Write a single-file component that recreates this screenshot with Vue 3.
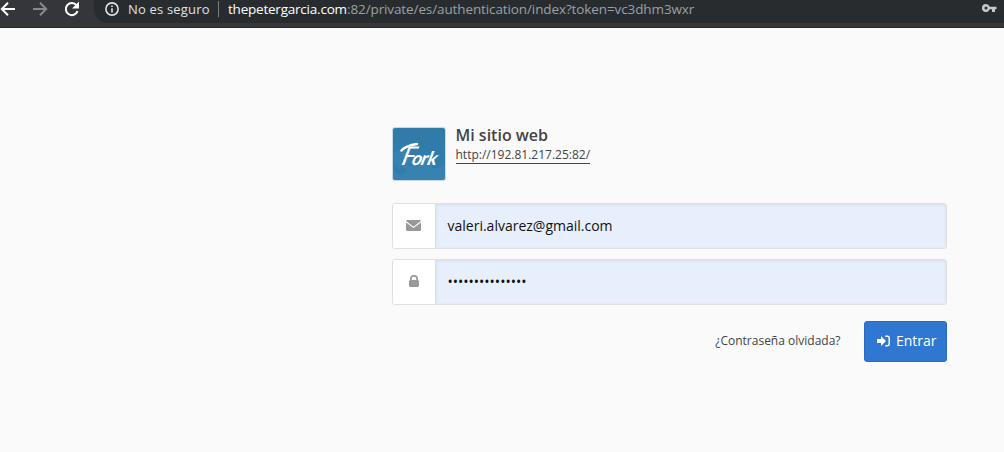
<script setup>
const password = '•'.repeat(15)
</script>

<template>
  <div class="page">
    <header class="toolbar">
      <nav class="nav">
        <svg class="nav-icon" viewBox="0 0 16 18"><path d="M15 9H2M8 2.700 1.800 9 8 15.300" /></svg>
        <svg class="nav-icon dim" viewBox="0 0 16 18"><path d="M1 9h13M8 2.700 14.200 9 8 15.300" /></svg>
        <svg class="nav-icon reload" viewBox="0 0 16 18"><path d="M13.600 11.200A6.100 6.100 0 1 1 12.600 5.100" /><path class="solid" d="M15 1.500v7H8z" /></svg>
      </nav>
      <div class="omnibox">
        <svg class="info" viewBox="0 0 14 14"><circle cx="7" cy="7" r="6.100" /><path d="M7 6.200v4.300M7 3.500v1.600" /></svg>
        <span class="secure">No es seguro</span>
        <i class="sep"></i>
        <span class="host">thepetergarcia.com</span><span class="path">:82/private/es/authentication/index?token=vc3dhm3wxr</span>
        <svg class="key" viewBox="0 0 15 8"><path fill-rule="evenodd" d="M4 0a4 4 0 1 0 3.700 5.300H10V8h3V5.300h1.500V2.700H7.700A4 4 0 0 0 4 0zm0 2.500a1.500 1.500 0 1 1 0 3 1.500 1.500 0 0 1 0-3z" /></svg>
      </div>
    </header>

    <main class="login">
      <div class="site">
        <svg class="logo" viewBox="0 0 54 54">
          <defs>
            <linearGradient id="sky" x1="0" y1="0" x2="0" y2="1"><stop offset="0" stop-color="#307ba8" /><stop offset="1" stop-color="#317dad" /></linearGradient>
          </defs>
          <rect x=".5" y=".5" width="53" height="53" rx="2.500" fill="url(#sky)" stroke="#c5dae7" />
          <path fill="#4389b8" d="M1 27c5-6 14-5 17 2 1 4-1 7-3 8 5 6 9-4 17-6 7-1 11 5 8 10 5 1 9 0 13-4v14l-2 2H3l-2-2v-8c4 5 10 6 13 2 2-5-4-7-7-3-4-4-6-6-6-10z" opacity=".4" />
          <g transform="translate(9.500 38) skewX(-14)">
            <text class="brand"><tspan class="cap" x="-1">F</tspan><tspan x="9.500">o</tspan><tspan x="18.500">r</tspan><tspan x="25">k</tspan></text>
          </g>
          <path class="swash" d="M9.500 23.500c3.500-4 9-5.500 15.500-6.500" />
        </svg>
        <div class="site-text">
          <h1>Mi sitio web</h1>
          <a class="site-url">http://192.81.217.25:82/</a>
        </div>
      </div>

      <div class="field">
        <span class="addon"><svg class="mail" viewBox="0 0 15 11"><path d="M1 0h13l1 1-7.500 5.700L0 1z" /><path d="M0 2.500 7.500 8 15 2.500V10l-1 1H1l-1-1z" /></svg></span>
        <span class="value">valeri.alvarez@gmail.com</span>
      </div>
      <div class="field">
        <span class="addon"><svg class="lock" viewBox="0 0 10 12"><path fill-rule="evenodd" d="M1 5V4a4 4 0 0 1 8 0v1l1 1v5l-1 1H1l-1-1V6zm1.700 0h4.600V4a2.300 2.300 0 0 0-4.600 0z" /></svg></span>
        <span class="value dots">{{ password }}</span>
      </div>

      <div class="actions">
        <a class="forgot">¿Contraseña olvidada?</a>
        <button class="submit">
          <svg viewBox="0 0 13 12"><path class="arrow" d="M0 4h4V1l5 5-5 5V8H0z" /><path class="door" d="M8.300 1.200h2.200a1.700 1.700 0 0 1 1.700 1.700v6.200a1.700 1.700 0 0 1-1.700 1.700H8.300" /></svg>
          <span>Entrar</span>
        </button>
      </div>
    </main>
  </div>
</template>

<style>
body {
  background: #fafafa;
}
</style>

<style scoped>
.page {
  height: 452px;
  overflow: hidden;
  background: #fafafa;
  color: #444;
  font-family: "Open Sans", "Noto Sans", sans-serif;
}
.toolbar {
  box-sizing: border-box;
  height: 28px;
  display: flex;
  background: #35363a;
  border-bottom: 1px solid #252629;
}
.nav {
  width: 94px;
  height: 18px;
  display: flex;
  gap: 16px;
  flex: none;
}
.nav-icon {
  width: 16px;
  height: 18px;
  fill: none;
  stroke: #fff;
  stroke-width: 2;
}
.nav-icon.dim {
  stroke: #87888b;
}
.nav-icon .solid {
  fill: #fff;
  stroke: none;
}
.omnibox {
  flex: 1;
  height: 23px;
  box-sizing: border-box;
  display: flex;
  padding-left: 11px;
  background: #282c2f;
  border-bottom-left-radius: 14px;
  font-size: 13.5px;
  line-height: 18px;
  white-space: pre;
}
.info {
  width: 14px;
  height: 14px;
  margin-top: 2px;
  fill: none;
  stroke: #dfe1e5;
  stroke-width: 1.6;
}
.secure {
  width: 90px;
  margin-left: 9px;
  color: #dfe1e5;
  font-size: 13px;
  letter-spacing: 0.18px;
}
.sep {
  width: 1px;
  height: 16px;
  margin-right: 9px;
  margin-top: 1px;
  background: #7b7e81;
}
.host {
  width: 119px;
  color: #fff;
  letter-spacing: -0.22px;
}
.path {
  color: #9aa0a6;
  letter-spacing: -0.11px;
}
.key {
  width: 15px;
  height: 8px;
  margin: 4px 7px 0 auto;
  fill: #c6c8cb;
}
.login {
  width: 555px;
  margin: 99px 0 0 392px;
}
.site {
  display: flex;
  height: 54px;
  margin-bottom: 22px;
}
.logo {
  width: 54px;
  height: 54px;
  margin-right: 9.5px;
}
.brand {
  font: italic 700 19px "Lato", sans-serif;
  fill: #fff;
}
.cap {
  font-size: 26px;
  font-weight: 400;
}
.swash {
  fill: none;
  stroke: #fff;
  stroke-width: 2.5;
  stroke-linecap: round;
}
h1 {
  margin: -2px 0 0;
  font-size: 16px;
  font-weight: 600;
  line-height: 20px;
}
.site-url {
  display: inline-block;
  height: 18px;
  border-bottom: 1px solid #444;
  font-size: 12px;
  line-height: 19px;
  vertical-align: top;
}
.field {
  box-sizing: border-box;
  height: 46px;
  display: flex;
  margin-bottom: 10px;
  border: 1px solid #e0e0e0;
  border-radius: 3px;
  overflow: hidden;
}
.addon {
  width: 42px;
  display: flex;
  align-items: center;
  justify-content: center;
  background: #fff;
  border-right: 1px solid #e0e0e0;
}
.addon svg {
  fill: #999;
}
.mail {
  width: 15px;
  height: 11px;
  margin: -1px 1px 0 0;
}
.lock {
  width: 10px;
  height: 12px;
  margin: -3px 1px 0 0;
}
.value {
  flex: 1;
  padding-left: 11.5px;
  background: #e8effc;
  box-shadow: inset 0 1px 3px rgba(0, 0, 0, 0.09);
  color: #111;
  font-size: 14px;
  line-height: 43px;
}
.actions {
  display: flex;
  justify-content: flex-end;
  margin-top: 16px;
}
.forgot {
  margin-right: 23.5px;
  font-size: 12px;
  line-height: 40px;
}
.submit {
  box-sizing: border-box;
  width: 83px;
  height: 41px;
  display: flex;
  align-items: center;
  gap: 6px;
  padding: 0 0 2px 12px;
  background: #2f77d1;
  border: 1px solid #286bc0;
  border-radius: 3px;
  color: #fff;
  font: 14px "Open Sans", sans-serif;
}
.submit svg {
  width: 13px;
  height: 12px;
}
.arrow {
  fill: #fff;
}
.door {
  fill: none;
  stroke: #fff;
  stroke-width: 1.5;
}
</style>
